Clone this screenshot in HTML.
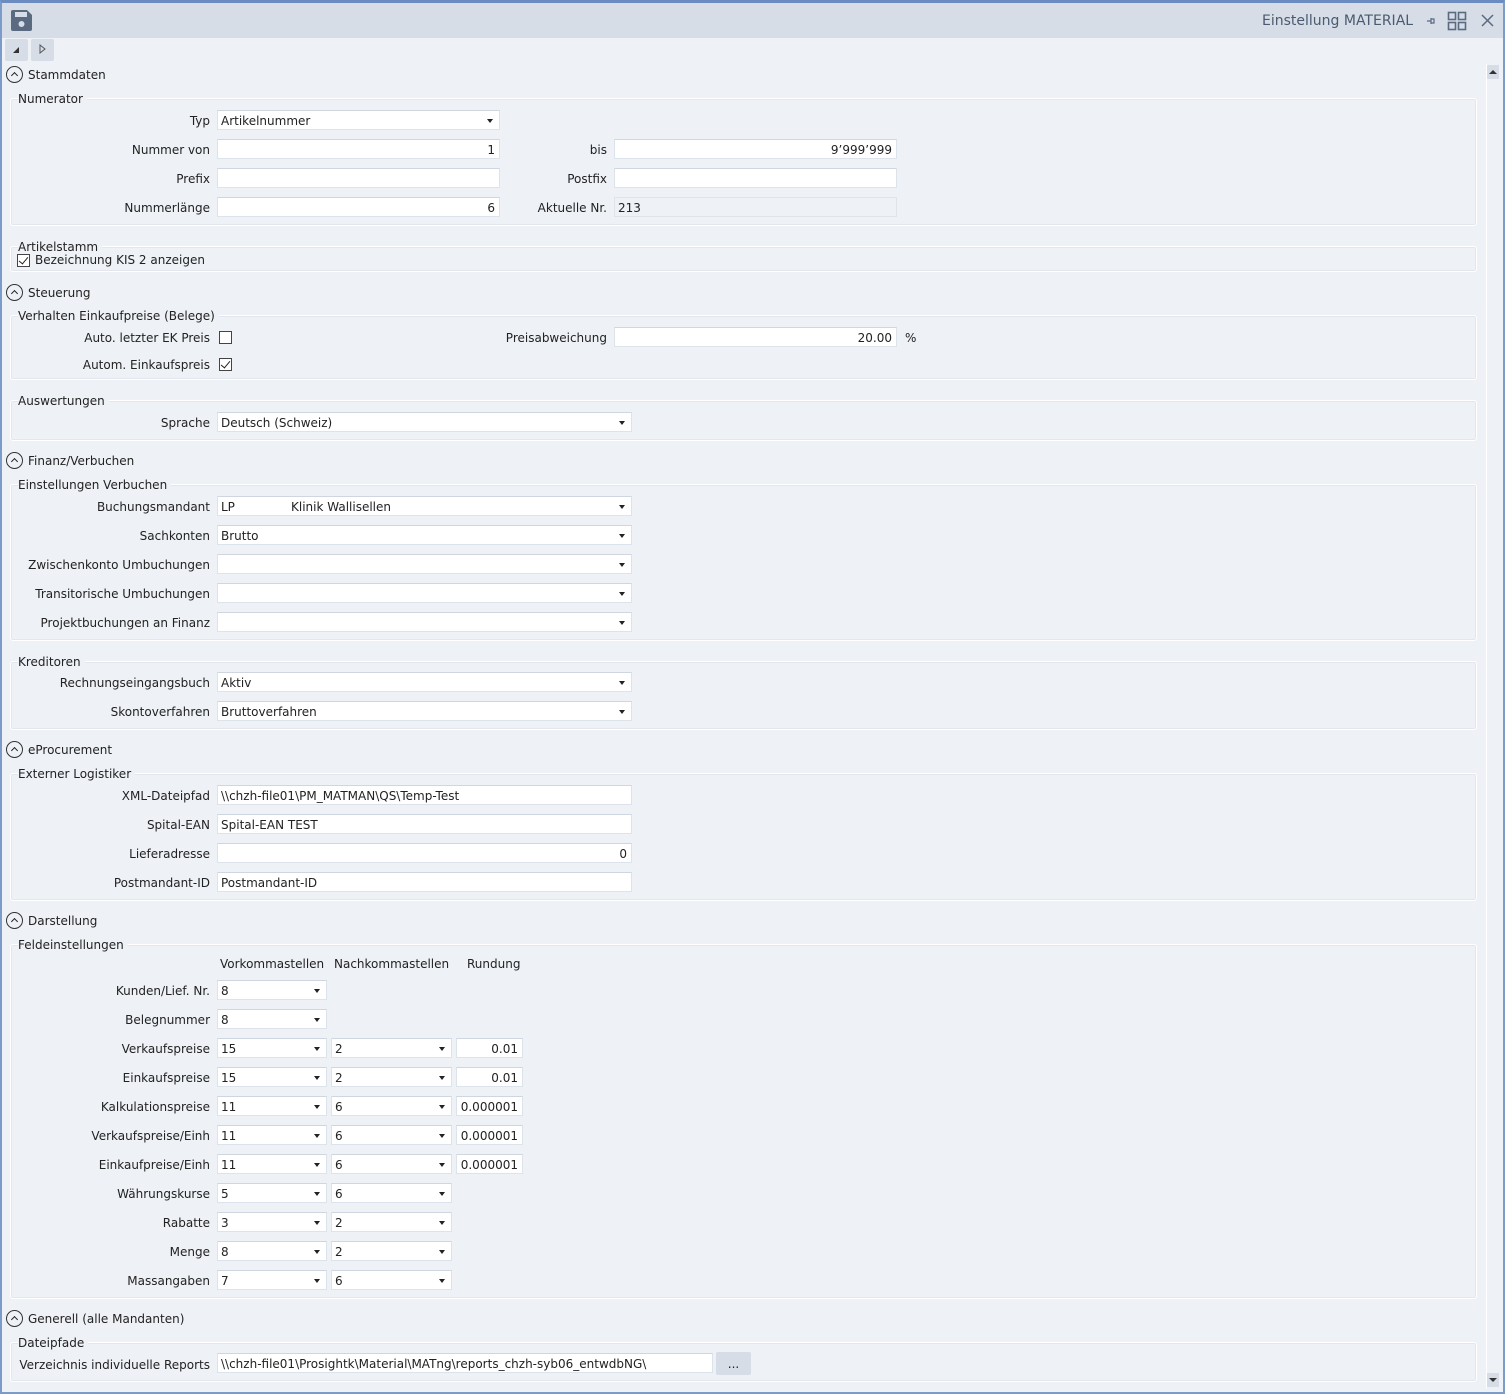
<!DOCTYPE html>
<html><head><meta charset="utf-8">
<style>
*{box-sizing:border-box;margin:0;padding:0}
body{width:1505px;height:1394px;background:#eef1f6;font-family:"DejaVu Sans","Liberation Sans",sans-serif;font-size:12px;color:#222;position:relative;overflow:hidden}
#win{position:absolute;left:0;top:0;width:1505px;height:1394px;border:2px solid #7b9ccb;border-top:3px solid #6a8cc0;background:#eef1f6}
#hdr{position:absolute;left:2px;top:3px;width:1501px;height:35px;background:#d6dde7}
.a{position:absolute;white-space:nowrap}
.t{margin-top:1px}
.l{position:absolute;white-space:nowrap;text-align:right;left:0;width:210px;margin-top:1px}
.i{position:absolute;height:20px;background:#fff;border:1px solid #dde3ea;border-top-color:#cfd6df;padding:0 3px;line-height:20px;white-space:nowrap;overflow:hidden}
.r{text-align:right;padding-right:4px}
.dd::after{content:"";position:absolute;right:6px;top:8px;border-left:3.5px solid transparent;border-right:3.5px solid transparent;border-top:4px solid #222}
.ro{background:#eef1f6;border-color:#dfe4ea}
.fs{position:absolute;left:10px;width:1467px;border:1px solid #fff;border-radius:3px;box-shadow:inset 0 0 0 1px #e3e7ed}
.lg{position:absolute;left:18px;white-space:nowrap;background:#eef1f6;padding-right:4px;margin-top:1px}
.sec{position:absolute;left:6px;white-space:nowrap;padding-left:22px;line-height:18px;margin-top:1px}
.sec::before{content:"";position:absolute;left:0;top:0;width:17px;height:17px;border:1.5px solid #333;border-radius:50%;box-sizing:border-box}
.sec::after{content:"";position:absolute;left:6px;top:6.5px;width:4px;height:4px;border-left:1.8px solid #222;border-top:1.8px solid #222;transform:rotate(45deg)}
.cb{position:absolute;width:13px;height:13px;border:1px solid #444;background:#fff}
.cb.c::after{content:"";position:absolute;left:3px;top:0px;width:4px;height:8px;border-right:1.6px solid #222;border-bottom:1.6px solid #222;transform:rotate(40deg)}
</style></head><body>
<div id="win"></div>
<div id="hdr"></div>
<svg class="a" style="left:10px;top:9px" width="23" height="23" viewBox="0 0 23 23"><path d="M3 1h14l5 5v14a2 2 0 0 1-2 2H3a2 2 0 0 1-2-2V3a2 2 0 0 1 2-2z" fill="#5a6a80"/><rect x="5" y="3" width="12" height="5" fill="#d6dde7"/><circle cx="11.5" cy="15" r="3" fill="#d6dde7"/></svg>
<div class="a" style="left:1262px;top:13px;font-size:14px;color:#4a5a70">Einstellung MATERIAL</div>
<svg class="a" style="left:1426px;top:16px" width="10" height="10" viewBox="0 0 10 10"><path d="M1 5h4M5 2v6M5 3h3v4H5" fill="none" stroke="#5a6a80" stroke-width="1.2"/></svg>
<svg class="a" style="left:1447px;top:11px" width="20" height="20" viewBox="0 0 20 20"><g fill="none" stroke="#5a6a80" stroke-width="1.6"><rect x="1.5" y="1.5" width="7" height="7"/><rect x="11.5" y="1.5" width="7" height="7"/><rect x="1.5" y="11.5" width="7" height="7"/><rect x="11.5" y="11.5" width="7" height="7"/></g></svg>
<svg class="a" style="left:1481px;top:14px" width="13" height="13" viewBox="0 0 13 13"><path d="M1 1L12 12M12 1L1 12" stroke="#5a6a80" stroke-width="1.5"/></svg>
<div class="a" style="left:5px;top:39px;width:23px;height:22px;background:#d6dde7;border-radius:2px"></div>
<div class="a" style="left:31px;top:39px;width:23px;height:22px;background:#d6dde7;border-radius:2px"></div>
<svg class="a" style="left:12px;top:46px" width="8" height="8"><path d="M1 7h6V1z" fill="#333"/></svg>
<svg class="a" style="left:39px;top:44px" width="8" height="10"><path d="M1 1l5 4-5 4z" fill="none" stroke="#555"/></svg>
<div class="a" style="left:1486px;top:64px;width:14px;height:1324px;background:#eef1f6;border-left:1px solid #fff"></div>
<div class="a" style="left:1487px;top:65px;width:12px;height:14px;background:#d6dde7"></div>
<svg class="a" style="left:1489px;top:69px" width="8" height="5"><path d="M0 5L4 1L8 5z" fill="#333"/></svg>
<div class="a" style="left:1487px;top:1373px;width:12px;height:14px;background:#d6dde7"></div>
<svg class="a" style="left:1489px;top:1378px" width="8" height="5"><path d="M0 0L4 4L8 0z" fill="#333"/></svg>

<div class="sec" style="top:65px">Stammdaten</div>
<div class="fs" style="top:98px;height:128px"></div>
<div class="lg" style="top:91px">Numerator</div>
<div class="l" style="top:113px">Typ</div><div class="i dd" style="left:217px;top:110px;width:283px">Artikelnummer</div>
<div class="l" style="top:142px">Nummer von</div><div class="i r" style="left:217px;top:139px;width:283px">1</div>
<div class="l" style="top:171px">Prefix</div><div class="i" style="left:217px;top:168px;width:283px"></div>
<div class="l" style="top:200px">Nummerlänge</div><div class="i r" style="left:217px;top:197px;width:283px">6</div>
<div class="l" style="top:142px;left:397px">bis</div><div class="i r" style="left:614px;top:139px;width:283px">9’999’999</div>
<div class="l" style="top:171px;left:397px">Postfix</div><div class="i" style="left:614px;top:168px;width:283px"></div>
<div class="l" style="top:200px;left:397px">Aktuelle Nr.</div><div class="i ro" style="left:614px;top:197px;width:283px">213</div>

<div class="fs" style="top:246px;height:26px"></div>
<div class="lg" style="top:239px">Artikelstamm</div>
<div class="cb c" style="left:17px;top:254px"></div>
<div class="a t" style="left:35px;top:252px">Bezeichnung KIS 2 anzeigen</div>

<div class="sec" style="top:283px">Steuerung</div>
<div class="fs" style="top:315px;height:65px"></div>
<div class="lg" style="top:308px">Verhalten Einkaufpreise (Belege)</div>
<div class="l" style="top:330px">Auto. letzter EK Preis</div><div class="cb" style="left:219px;top:331px"></div>
<div class="l" style="top:357px">Autom. Einkaufspreis</div><div class="cb c" style="left:219px;top:358px"></div>
<div class="l" style="top:330px;left:397px">Preisabweichung</div><div class="i r" style="left:614px;top:327px;width:283px">20.00</div>
<div class="a t" style="left:905px;top:330px">%</div>

<div class="fs" style="top:400px;height:41px"></div>
<div class="lg" style="top:393px">Auswertungen</div>
<div class="l" style="top:415px">Sprache</div><div class="i dd" style="left:217px;top:412px;width:415px">Deutsch (Schweiz)</div>

<div class="sec" style="top:451px">Finanz/Verbuchen</div>
<div class="fs" style="top:484px;height:157px"></div>
<div class="lg" style="top:477px">Einstellungen Verbuchen</div>
<div class="l" style="top:499px">Buchungsmandant</div><div class="i dd" style="left:217px;top:496px;width:415px">LP<span style="position:absolute;left:73px">Klinik Wallisellen</span></div>
<div class="l" style="top:528px">Sachkonten</div><div class="i dd" style="left:217px;top:525px;width:415px">Brutto</div>
<div class="l" style="top:557px">Zwischenkonto Umbuchungen</div><div class="i dd" style="left:217px;top:554px;width:415px"></div>
<div class="l" style="top:586px">Transitorische Umbuchungen</div><div class="i dd" style="left:217px;top:583px;width:415px"></div>
<div class="l" style="top:615px">Projektbuchungen an Finanz</div><div class="i dd" style="left:217px;top:612px;width:415px"></div>

<div class="fs" style="top:661px;height:69px"></div>
<div class="lg" style="top:654px">Kreditoren</div>
<div class="l" style="top:675px">Rechnungseingangsbuch</div><div class="i dd" style="left:217px;top:672px;width:415px">Aktiv</div>
<div class="l" style="top:704px">Skontoverfahren</div><div class="i dd" style="left:217px;top:701px;width:415px">Bruttoverfahren</div>

<div class="sec" style="top:740px">eProcurement</div>
<div class="fs" style="top:773px;height:128px"></div>
<div class="lg" style="top:766px">Externer Logistiker</div>
<div class="l" style="top:788px">XML-Dateipfad</div><div class="i" style="left:217px;top:785px;width:415px">\\chzh-file01\PM_MATMAN\QS\Temp-Test</div>
<div class="l" style="top:817px">Spital-EAN</div><div class="i" style="left:217px;top:814px;width:415px">Spital-EAN TEST</div>
<div class="l" style="top:846px">Lieferadresse</div><div class="i r" style="left:217px;top:843px;width:415px">0</div>
<div class="l" style="top:875px">Postmandant-ID</div><div class="i" style="left:217px;top:872px;width:415px">Postmandant-ID</div>

<div class="sec" style="top:911px">Darstellung</div>
<div class="fs" style="top:944px;height:355px"></div>
<div class="lg" style="top:937px">Feldeinstellungen</div>
<div class="a t" style="left:220px;top:956px">Vorkommastellen</div>
<div class="a t" style="left:334px;top:956px">Nachkommastellen</div>
<div class="a t" style="left:467px;top:956px">Rundung</div>

<div class="l" style="top:983px">Kunden/Lief. Nr.</div><div class="i dd" style="left:217px;top:980px;width:110px">8</div>
<div class="l" style="top:1012px">Belegnummer</div><div class="i dd" style="left:217px;top:1009px;width:110px">8</div>
<div class="l" style="top:1041px">Verkaufspreise</div><div class="i dd" style="left:217px;top:1038px;width:110px">15</div><div class="i dd" style="left:331px;top:1038px;width:121px">2</div><div class="i r" style="left:456px;top:1038px;width:67px">0.01</div>
<div class="l" style="top:1070px">Einkaufspreise</div><div class="i dd" style="left:217px;top:1067px;width:110px">15</div><div class="i dd" style="left:331px;top:1067px;width:121px">2</div><div class="i r" style="left:456px;top:1067px;width:67px">0.01</div>
<div class="l" style="top:1099px">Kalkulationspreise</div><div class="i dd" style="left:217px;top:1096px;width:110px">11</div><div class="i dd" style="left:331px;top:1096px;width:121px">6</div><div class="i r" style="left:456px;top:1096px;width:67px">0.000001</div>
<div class="l" style="top:1128px">Verkaufspreise/Einh</div><div class="i dd" style="left:217px;top:1125px;width:110px">11</div><div class="i dd" style="left:331px;top:1125px;width:121px">6</div><div class="i r" style="left:456px;top:1125px;width:67px">0.000001</div>
<div class="l" style="top:1157px">Einkaufpreise/Einh</div><div class="i dd" style="left:217px;top:1154px;width:110px">11</div><div class="i dd" style="left:331px;top:1154px;width:121px">6</div><div class="i r" style="left:456px;top:1154px;width:67px">0.000001</div>
<div class="l" style="top:1186px">Währungskurse</div><div class="i dd" style="left:217px;top:1183px;width:110px">5</div><div class="i dd" style="left:331px;top:1183px;width:121px">6</div>
<div class="l" style="top:1215px">Rabatte</div><div class="i dd" style="left:217px;top:1212px;width:110px">3</div><div class="i dd" style="left:331px;top:1212px;width:121px">2</div>
<div class="l" style="top:1244px">Menge</div><div class="i dd" style="left:217px;top:1241px;width:110px">8</div><div class="i dd" style="left:331px;top:1241px;width:121px">2</div>
<div class="l" style="top:1273px">Massangaben</div><div class="i dd" style="left:217px;top:1270px;width:110px">7</div><div class="i dd" style="left:331px;top:1270px;width:121px">6</div>

<div class="sec" style="top:1309px">Generell (alle Mandanten)</div>
<div class="fs" style="top:1342px;height:40px"></div>
<div class="lg" style="top:1335px">Dateipfade</div>
<div class="l" style="top:1357px">Verzeichnis individuelle Reports</div>
<div class="i" style="left:217px;top:1353px;width:496px">\\chzh-file01\Prosightk\Material\MATng\reports_chzh-syb06_entwdbNG\</div>
<div class="a" style="left:716px;top:1352px;width:35px;height:23px;background:#d6dde7;border-radius:2px;text-align:center;line-height:24px">...</div>
</body></html>
